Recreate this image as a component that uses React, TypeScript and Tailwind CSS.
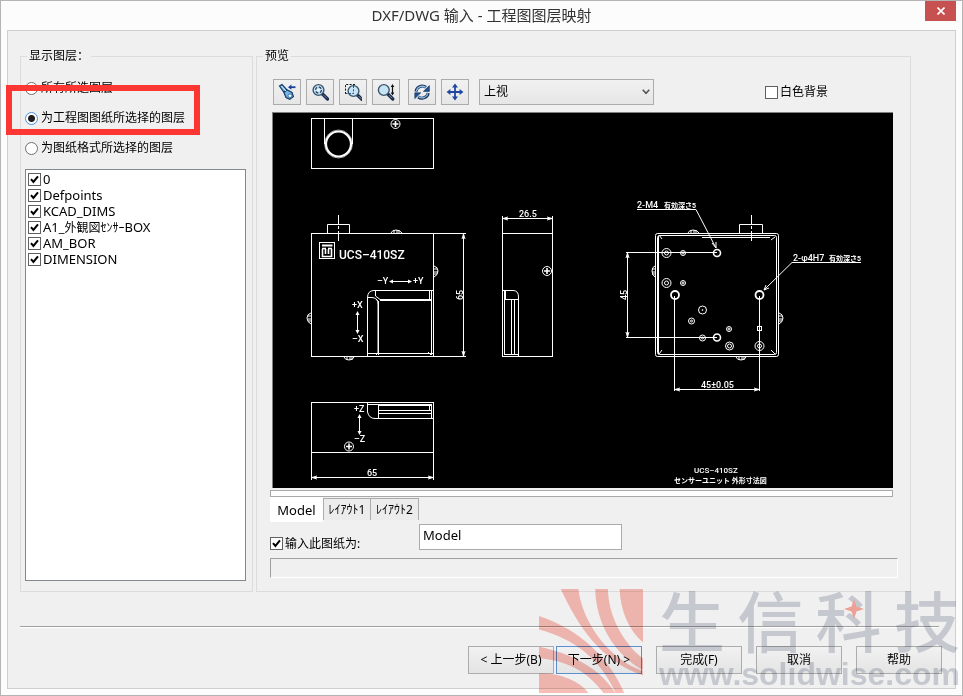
import React, { FC, ReactNode, useState } from 'react';

const LAYERS = [
  { name: ['0', '', ''] },
  { name: ['Defpoints', '', ''] },
  { name: ['KCAD_DIMS', '', ''] },
  { name: ['A1_', '外観図ｾﾝｻｰ', 'BOX'] },
  { name: ['AM_BOR', '', ''] },
  { name: ['DIMENSION', '', ''] },
];

interface CheckProps {
  children: ReactNode;
  defaultChecked?: boolean;
  className?: string;
}

const Check: FC<CheckProps> = ({ children, defaultChecked, className = '' }) => (
  <label className={`flex items-center gap-[2px] whitespace-nowrap ${className}`}>
    <span className="relative size-[13px] shrink-0">
      <input
        type="checkbox"
        defaultChecked={defaultChecked}
        className="peer block size-[13px] appearance-none border border-[#606060] bg-white"
      />
      <svg
        viewBox="0 0 13 13"
        className="pointer-events-none absolute inset-0 hidden size-[13px] peer-checked:block"
      >
        <path d="M3 6.2 L5.4 9 L10 3.4" fill="none" stroke="#000" strokeWidth="2" />
      </svg>
    </span>
    <span>{children}</span>
  </label>
);

interface RadioProps {
  label: string;
  checked: boolean;
  onChange: () => void;
}

const Radio: FC<RadioProps> = ({ label, checked, onChange }) => (
  <label className="flex h-5 items-center gap-[3px] whitespace-nowrap">
    <input
      type="radio"
      name="layers"
      checked={checked}
      onChange={onChange}
      className="size-[13px] shrink-0 appearance-none rounded-full border border-[#707070] bg-white checked:border-[#4a90d9] checked:bg-[radial-gradient(circle,#1e1e1e_0_3px,#fff_4px)]"
    />
    {label}
  </label>
);

const Lens: FC<{ cx: number; cy: number }> = ({ cx, cy }) => (
  <g>
    <path
      d={`M${cx + 4} ${cy + 4} l5 5`}
      stroke="#1a2c48"
      strokeWidth="3.2"
      strokeLinecap="round"
    />
    <path d={`M${cx + 5} ${cy + 5} l3.4 3.4`} stroke="#6f8cb0" strokeWidth="1" />
    <circle cx={cx} cy={cy} r="5.4" fill="#c6e4f4" stroke="#3c5670" strokeWidth="1.4" />
  </g>
);

const ZOOM_TOOLS = [
  {
    title: 'Previous view',
    icon: (
      <>
        <path d="M1.5 3 L4 1.5 L8.5 6.5 L14 9.5 L15.4 13.6 L11.8 16.4 L8 14.5 L6 9.5 Z" fill="#78b4dc" stroke="#123a6b" strokeWidth="1.2" />
        <path d="M5.8 9.4 L9 6.4" stroke="#123a6b" strokeWidth="1.4" />
        <path d="M3.4 3 L8 8" stroke="#d8f0fc" strokeWidth="1" />
        <ellipse cx="12" cy="12.8" rx="2" ry="1.8" fill="#e4f6ff" stroke="#2a64a0" strokeWidth=".8" />
        <path d="M17.5 4.2 H13" stroke="#1c3f9c" strokeWidth="1.8" />
        <path d="M10 4.2 L13.4 1.6 V6.8 Z" fill="#1c3f9c" />
      </>
    ),
  },
  {
    title: 'Zoom to fit',
    icon: (
      <>
        <Lens cx={7.5} cy={7} />
        <circle cx="7.5" cy="7" r="3" stroke="#2c4a6c" strokeWidth="1.4" strokeDasharray="3 1.7" />
        <rect x="6.3" y="5.8" width="2.4" height="2.4" fill="#eef8fd" />
      </>
    ),
  },
  {
    title: 'Zoom to area',
    icon: (
      <>
        <Lens cx={9.5} cy={8} />
        <path d="M1.5 11 V1.5 H11" fill="none" stroke="#111" strokeDasharray="2 1.4" />
        <path d="M1.5 10.5 H9.5 V2" fill="none" stroke="#27517f" strokeDasharray="2 1.4" />
      </>
    ),
  },
  {
    title: 'Zoom in/out',
    icon: (
      <>
        <Lens cx={6.8} cy={7} />
        <path d="M15.5 3 V11" stroke="#111" strokeWidth="1.2" />
        <path d="M15.5 1 L17.3 4 H13.7 Z M15.5 12.6 L13.7 9.6 H17.3 Z" fill="#111" />
      </>
    ),
  },
];

const MOVE_TOOLS = [
  {
    title: 'Rotate view',
    icon: (
      <>
        <path d="M3 8.5 A6.3 6 0 0 1 13 4.2" fill="none" stroke="#12315c" strokeWidth="3" />
        <path d="M3.3 8 A6 6 0 0 1 12.6 4.4" fill="none" stroke="#8fc0e6" strokeWidth="1.3" />
        <path d="M16.4 2.6 V8.4 H10.4 Z" fill="#1c4f94" stroke="#12315c" strokeWidth=".6" />
        <path d="M15.2 10 A6.3 6 0 0 1 5.2 14" fill="none" stroke="#12315c" strokeWidth="3" />
        <path d="M14.9 10.4 A6 6 0 0 1 5.6 13.8" fill="none" stroke="#8fc0e6" strokeWidth="1.3" />
        <path d="M1.8 15.6 V9.8 H7.8 Z" fill="#1c4f94" stroke="#12315c" strokeWidth=".6" />
      </>
    ),
  },
  {
    title: 'Pan',
    icon: (
      <>
        <path d="M9 3 V15 M3 9 H15" stroke="#1d47a0" strokeWidth="1.8" />
        <path d="M9 .6 L12 4.4 H6 Z M9 17.4 L6 13.6 H12 Z M.6 9 L4.4 6 V12 Z M17.4 9 L13.6 12 V6 Z" fill="#1d47a0" />
      </>
    ),
  },
];

const ToolGroup: FC<{ tools: { title: string; icon: ReactNode }[] }> = ({ tools }) => (
  <div className="flex gap-[5px]">
    {tools.map(({ title, icon }) => (
      <button
        key={title}
        aria-label={title}
        className="flex h-[26px] w-7 items-center justify-center border border-[#acacac] bg-linear-to-b from-[#f1f1f1] to-[#e6e6e6]"
      >
        <svg viewBox="0 0 18 18" className="size-[18px]" fill="none">
          {icon}
        </svg>
      </button>
    ))}
  </div>
);

// Small crossed screw head
const Screw: FC<{ x: number; y: number }> = ({ x, y }) => (
  <g>
    <circle cx={x} cy={y} r="4.5" />
    <path d={`M${x - 3} ${y} h6 M${x} ${y - 3} v6`} strokeWidth="1.6" />
  </g>
);

const Hole: FC<{ x: number; y: number; r: number; inner?: number }> = ({ x, y, r, inner = 1 }) => (
  <g>
    <circle cx={x} cy={y} r={r} />
    <circle cx={x} cy={y} r={inner} />
  </g>
);

const Drawing: FC = () => (
  <svg viewBox="273 113 620 375" className="block h-auto w-full bg-black">
    <g fill="none" stroke="#fff" strokeWidth="1">
      {/* top view */}
      <rect x="311.5" y="118.5" width="122" height="50" />
      <path d="M324.5 118 V144 M352.5 118 V144" />
      <circle cx="338.5" cy="144" r="12.5" strokeWidth="2.2" />
      <circle cx="338.5" cy="144" r="14" strokeWidth=".6" />
      <Screw x={395.5} y={124} />

      {/* front view */}
      <rect x="311.5" y="233.5" width="122" height="123" />
      <path d="M327.5 233 V224.5 H349.5 V233 M338.5 215 V224 M338.5 226 v3 M338.5 231 V241" />
      <path d="M391 233 q1 -3 5 -3 q4 0 6 3 M394 233 v-3 M397 233 v-3 M399 233 v-3" />
      <path d="M434 266 q4 1 4 5 q0 4 -4 6 M434 269 h3 M434 272 h4 M434 274 h3" />
      <path d="M311 313 q-4 1 -4 5 q0 4 4 6 M311 316 h-3 M311 319 h-3 M311 321 h-3" />
      <path d="M344 357 q1 3 5 3 q4 0 5 -3 M347 357 v3 M350 357 v3 M352 357 v3" />
      <rect x="319.5" y="242.5" width="15" height="16" />
      <path d="M322 245.5 H332.5" strokeWidth="2" />
      <path d="M322.5 249 V256.5 H331.5 V249 M325.5 249 V254 M328.5 249 V254 M322 248.5 H326 M328 248.5 H332" strokeWidth="1.6" />
      <path d="M367.5 356 V298 Q367.5 290.5 374 290.5 H433" />
      <path d="M368 297.5 H372 Q378 298 378 304 V354 M378.5 301 V355 M375.5 291 V296 L380 299.5 M380 299.5 H432 M380 300.5 H431 M429.5 291 V299 M431.5 291 V355 M368 353.5 H433 M379 302 L376 299 M431 355 L428 352 M379 352 L376 355" />
      <path d="M391 281.5 H410 M357.5 313 V332" />
      <path d="M433 233.5 H466 M433 356.5 H466 M463.5 234 V356 M462 239 L463.5 234 L465 239 M462 351 L463.5 356 L465 351" />

      {/* side view */}
      <rect x="502.5" y="233.5" width="50" height="123" />
      <path d="M502.5 216 V234 M552.5 216 V234 M503 218.5 H552 M508 217 L503 218.5 L508 220 M547 217 L552 218.5 L547 220" />
      <Screw x={547} y={271} />
      <path d="M503 290.5 H513 Q518.5 290.5 518.5 297 V356 M504.5 291 V355 M505.5 291 V299 M504 299.5 H518 M504 354.5 H518 M511.5 300 V354 M514.5 300 V354" />

      {/* bottom view */}
      <rect x="311.5" y="402.5" width="122" height="50" />
      <path d="M311.5 452 V480 M433.5 452 V480 M312 477.5 H433 M317 476 L312 477.5 L317 479 M428 476 L433 477.5 L428 479" />
      <path d="M367.5 403 V412 Q369 418.5 375 418.5 H433 M368 404.5 H431 M378 405.5 H431 M378 410.5 H431 M378 413.5 H432 M378.5 405 V418 M429.5 405 V411 M431.5 404 V418" />
      <path d="M359.5 416 V433" />
      <Screw x={349} y={446.5} />

      {/* back view */}
      <rect x="655.5" y="233.5" width="123" height="123" rx="2" />
      <rect x="657.5" y="235.5" width="119" height="119" rx="2" />
      <path d="M658.5 236 V354 M702 237.5 H770 M659 235 L662 239 M775 237 L771 240 M659 354 L662 350 M775 354 L771 350" />
      <path d="M739.5 233 V224.5 H762.5 V233 M751.5 215 V224 M751.5 226 v3 M751.5 231 V241" />
      <path d="M688 233 q1 -3 5 -3 q4 0 6 3 M691 233 v-3 M694 233 v-3 M696 233 v-3" />
      <path d="M655 266 q-3 1 -3 5 q0 4 3 6 M655 269 h-3 M655 272 h-3 M655 274 h-3" />
      <path d="M779 313 q4 1 4 5 q0 4 -4 6 M779 316 h3 M779 319 h4 M779 321 h3" />
      <path d="M736 357 q1 3 5 3 q4 0 5 -3 M739 357 v3 M742 357 v3 M744 357 v3" />
      <path d="M626 252.5 H717 M626 337.5 H717 M627.5 253 V337 M626 258 L627.5 253 L629 258 M626 332 L627.5 337 L629 332" />
      <path d="M674.5 296 V391 M759.5 296 V391 M675 389.5 H759 M680 388 L675 389.5 L680 391 M754 388 L759 389.5 L754 391" />
      <path d="M637 209.5 H696 L716 248 M712 243 L716 248 L716 242" />
      <path d="M861 262.5 H792 L764 290 M766 285 L764 290 L769 288" />
      <Hole x={666.5} y={253} r={4.5} inner={2} />
      <Hole x={683} y={253} r={2.5} />
      <circle cx="717" cy="253" r="3.5" strokeWidth="1.6" />
      <Hole x={666.5} y={283} r={4.5} inner={2} />
      <Hole x={683} y={283} r={2.5} />
      <circle cx="675" cy="295" r="4" strokeWidth="1.8" />
      <circle cx="759.5" cy="295" r="4" strokeWidth="1.8" />
      <Hole x={702.5} y={310} r={4} inner={0.5} />
      <Hole x={691.5} y={321} r={3} />
      <Hole x={702.5} y={338} r={3} />
      <circle cx="717" cy="337.5" r="3.5" strokeWidth="1.6" />
      <Hole x={729} y={329} r={2.5} />
      <Hole x={729.5} y={346} r={4} inner={2} />
      <rect x="757.5" y="326.5" width="4" height="4" />
      <Hole x={759.5} y={346} r={4.5} inner={2} />
    </g>
    <g fill="#fff">
      <path d="M389 281.5 l4 -2 v4 Z M412 281.5 l-4 -2 v4 Z M357.5 311 l-2 4 h4 Z M357.5 334 l-2 -4 h4 Z M359.5 414 l-2 4 h4 Z M359.5 435 l-2 -4 h4 Z" />
      <g className="font-['Roboto','Noto_Sans_CJK_JP',sans-serif] text-[9px] font-medium">
        <text x="339" y="259" className="text-[12px]">UCS–410SZ</text>
        <text x="377" y="284">–Y</text>
        <text x="413" y="284">+Y</text>
        <text x="352" y="308">+X</text>
        <text x="352" y="342">–X</text>
        <text x="354" y="412">+Z</text>
        <text x="354" y="442">–Z</text>
        <text x="367" y="476">65</text>
        <text x="519" y="217">26.5</text>
        <text transform="translate(463 300) rotate(-90)">65</text>
        <text transform="translate(627 300) rotate(-90)">45</text>
        <text x="701" y="388">45±0.05</text>
        <text x="637" y="208">2-M4</text>
        <text x="664" y="208" className="text-[7px] font-bold">有効深さ5</text>
        <text x="793" y="261">2-φ4H7</text>
        <text x="829" y="261" className="text-[7px] font-bold">有効深さ5</text>
        <text x="694" y="473" className="text-[8px]">UCS–410SZ</text>
        <text x="674" y="483" className="text-[7px] font-bold">センサーユニット 外形寸法図</text>
      </g>
    </g>
  </svg>
);

const Watermark: FC = () => (
  <div className="pointer-events-none absolute right-0 bottom-[2px] flex items-end gap-4 pr-[2px] mix-blend-multiply">
    <svg viewBox="297 27 311 311" className="size-[104px]" fill="#fbbfb8">
      <path d="M538 27 H608 V187 C565 150 540 90 538 27 Z" />
      <path d="M465 27 H503 C505 110 550 190 608 235 V270 C520 220 468 130 465 27 Z" />
      <path d="M362 27 H415 C425 120 500 235 608 272 V286 C480 240 415 140 362 27 Z" />
      <path d="M297 108 C420 150 505 230 552 338 H526 C480 235 400 175 297 148 Z" />
      <path d="M297 200 C395 220 480 265 525 338 H490 C440 270 380 242 297 233 Z" />
      <path d="M297 280 C360 278 415 300 445 338 H297 Z" />
    </svg>
    <div className="relative font-['Liberation_Sans','Noto_Sans_CJK_SC',sans-serif] font-bold text-[#d2d5dc]">
      <div className="flex justify-between text-[66px] leading-[66px] font-medium">
        <span>生</span>
        <span>信</span>
        <span>科</span>
        <span>技</span>
      </div>
      <div className="pb-[2px] text-[32px] leading-[34px]">www.solidwise.com</div>
      <svg viewBox="0 0 20 20" className="absolute top-2 right-24 size-5" fill="#fbaaa0">
        <path d="M10 0 L12.5 7.5 L20 10 L12.5 12.5 L10 20 L7.5 12.5 L0 10 L7.5 7.5 Z" />
      </svg>
    </div>
  </div>
);

const BUTTON =
  'h-7 w-[86px] border border-[#acacac] bg-linear-to-b from-[#f1f1f1] to-[#e4e4e4] whitespace-nowrap';

const App: FC = () => {
  const [mode, setMode] = useState(1);

  return (
    <div className="relative flex min-h-screen flex-col border border-[#b4b4b4] bg-[#fcfcfc] px-[6px] pb-[6px] font-['Noto_Sans','Noto_Sans_CJK_SC',sans-serif] text-xs leading-4 text-black">
      <header className="mb-[2px] grid h-[27px] grid-cols-[1fr_auto_1fr] items-center">
        <h1 className="col-start-2 text-[15px] leading-5 text-[#333]">
          DXF/DWG 输入 - 工程图图层映射
        </h1>
        <button
          aria-label="Close"
          className="flex h-5 w-[31px] items-center justify-center self-start justify-self-end bg-[#c75050]"
        >
          <svg viewBox="0 0 8 8" className="size-2">
            <path d="M.5 .5 L7.5 7.5 M7.5 .5 L.5 7.5" stroke="#fff" strokeWidth="1.6" />
          </svg>
        </button>
      </header>

      <main className="flex-1 border border-[#cfcfcf] bg-[#f0f0f0] pl-3">
        <div className="mt-[17px] mr-11 flex gap-[3px]">
          <fieldset className="flex w-[233px] shrink-0 flex-col border border-[#dcdcdc] px-1 pt-[14px] pb-[10px]">
            <legend className="ml-[2px] px-[2px]">显示图层：</legend>
            <div className="flex flex-col gap-[10px]">
              <Radio label="所有所选图层" checked={mode === 0} onChange={() => setMode(0)} />
              <div className="relative">
                <Radio
                  label="为工程图图纸所选择的图层"
                  checked={mode === 1}
                  onChange={() => setMode(1)}
                />
                <div className="pointer-events-none absolute -top-[23px] -left-[19px] h-[50px] w-[194px] border-[6px] border-[#fc3633]" />
              </div>
              <Radio
                label="为图纸格式所选择的图层"
                checked={mode === 2}
                onChange={() => setMode(2)}
              />
            </div>
            <ul className="mt-[11px] mr-[2px] flex-1 border border-[#828790] bg-white px-[2px] py-px">
              {LAYERS.map(({ name }) => (
                <li key={name[0]}>
                  <Check defaultChecked className="h-4 text-[13px]">
                    {name[0]}
                    <span className="text-xs">{name[1]}</span>
                    {name[2]}
                  </Check>
                </li>
              ))}
            </ul>
          </fieldset>

          <fieldset className="min-w-0 flex-1 border border-[#dcdcdc] pt-[15px] pr-3 pb-[13px] pl-[13px]">
            <legend className="-ml-[7px] px-[2px]">预览</legend>
            <div className="flex items-center gap-2 pr-[70px] pl-[3px]">
              <ToolGroup tools={ZOOM_TOOLS} />
              <ToolGroup tools={MOVE_TOOLS} />
              <div className="relative ml-[2px]">
                <select
                  aria-label="视图"
                  className="block h-[26px] w-[175px] appearance-none border border-[#acacac] bg-linear-to-b from-[#f1f1f1] to-[#e6e6e6] px-1"
                >
                  <option>上视</option>
                </select>
                <svg
                  viewBox="0 0 8 6"
                  className="pointer-events-none absolute top-[10px] right-1 h-[6px] w-2"
                >
                  <path d="M.7 .8 L4 4.4 L7.3 .8" fill="none" stroke="#555" strokeWidth="1.6" />
                </svg>
              </div>
              <Check className="ml-auto">白色背景</Check>
            </div>

            <div className="mt-[7px] mr-[5px] ml-[2px] border-t border-l border-[#808080]">
              <Drawing />
            </div>
            <div className="mt-[2px] mr-[5px] h-[7px] border border-[#a8a8a8] bg-white" />

            <div className="relative flex">
              <div className="flex w-[149px] flex-col justify-between">
                <div role="tablist" className="flex items-start">
                  <button role="tab" className="h-[25px] w-[53px] bg-white text-[13px]">
                    Model
                  </button>
                  <button role="tab" className="mt-px h-[22px] w-12 border border-b-0 border-[#acacac] bg-[#ececec]">
                    ﾚｲｱｳﾄ1
                  </button>
                  <button role="tab" className="mt-px h-[22px] w-12 border border-b-0 border-l-0 border-[#acacac] bg-[#ececec]">
                    ﾚｲｱｳﾄ2
                  </button>
                </div>
                <Check defaultChecked className="h-[13px]">
                  输入此图纸为:
                </Check>
              </div>
              <input
                type="text"
                aria-label="输入此图纸为"
                defaultValue="Model"
                className="mt-[27px] h-[26px] w-[203px] border border-[#ababab] bg-white px-[3px] pb-1 text-[13px]"
              />
            </div>
            <div className="mt-2 h-5 border border-t-[#a0a0a0] border-r-white border-b-white border-l-[#a0a0a0]" />
          </fieldset>
        </div>

        <div className="mt-[34px] mr-4 border-t border-[#a0a0a0] border-b border-b-white" />
        <div className="mt-[18px] mr-[13px] flex justify-end gap-[14px] pb-[13px]">
          <div className="flex gap-[2px]">
            <button className={BUTTON}>&lt; 上一步(B)</button>
            <button className="h-7 w-[86px] border border-[#5a8fd0] bg-linear-to-b from-[#f1f1f1] to-[#e4e4e4] whitespace-nowrap">
              下一步(N) &gt;
            </button>
          </div>
          <button className={BUTTON}>完成(F)</button>
          <button className={BUTTON}>取消</button>
          <button className={BUTTON}>帮助</button>
        </div>
      </main>

      <Watermark />
    </div>
  );
};

export default App;
